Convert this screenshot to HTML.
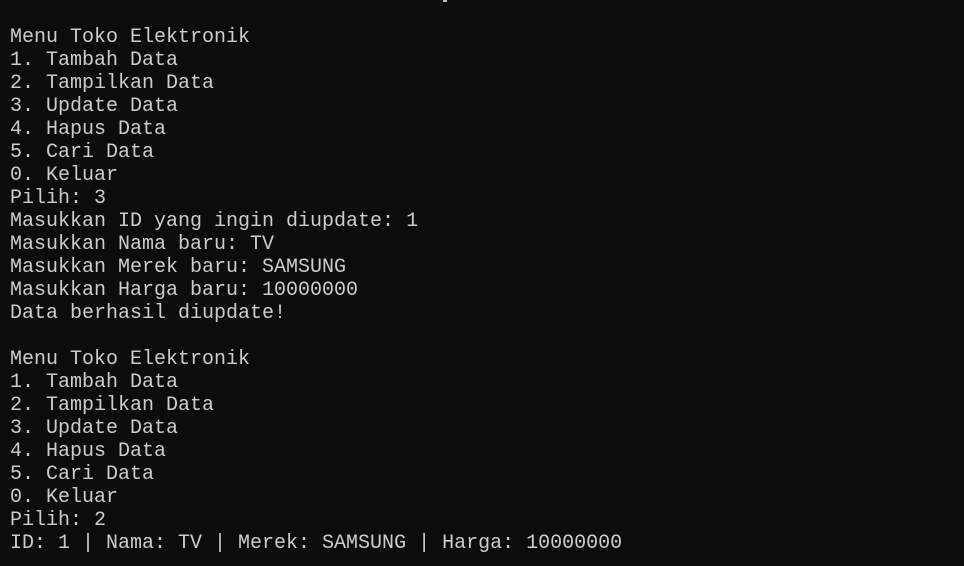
<!DOCTYPE html>
<html><head><meta charset="utf-8"><style>
html,body{margin:0;padding:0;background:#0c0c0c;width:964px;height:566px;overflow:hidden}
pre{position:absolute;left:10px;top:26px;margin:0;font-family:"Liberation Mono",monospace;font-size:20px;line-height:23px;color:#cccccc;letter-spacing:0}
.m{position:absolute;left:443px;top:0;width:4px;height:2px;background:#bbb}
</style></head><body>
<div class="m"></div>
<pre>Menu Toko Elektronik
1. Tambah Data
2. Tampilkan Data
3. Update Data
4. Hapus Data
5. Cari Data
0. Keluar
Pilih: 3
Masukkan ID yang ingin diupdate: 1
Masukkan Nama baru: TV
Masukkan Merek baru: SAMSUNG
Masukkan Harga baru: 10000000
Data berhasil diupdate!

Menu Toko Elektronik
1. Tambah Data
2. Tampilkan Data
3. Update Data
4. Hapus Data
5. Cari Data
0. Keluar
Pilih: 2
ID: 1 | Nama: TV | Merek: SAMSUNG | Harga: 10000000</pre>
</body></html>
